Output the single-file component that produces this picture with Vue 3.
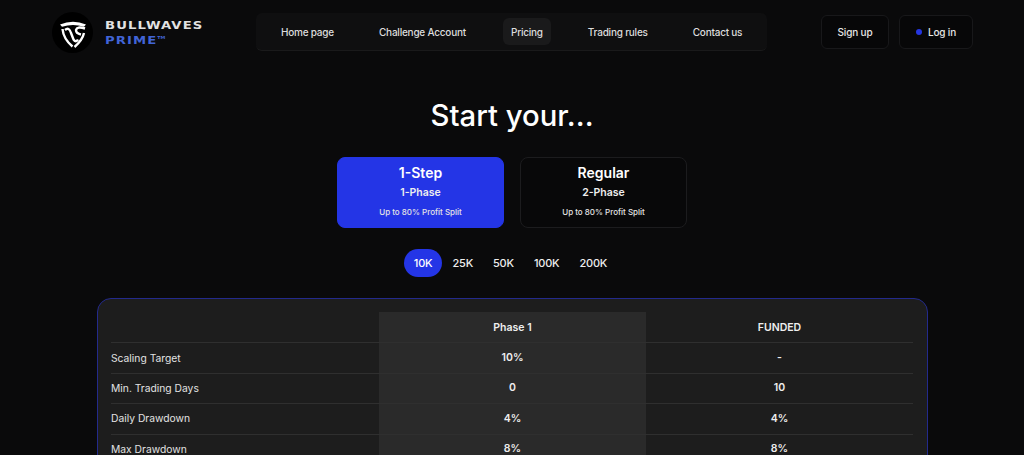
<template>
  <div class="page">
    <header class="topbar">
      <div class="brand">
        <svg class="logo" width="41" height="41" viewBox="0 0 41 41">
          <circle cx="20.5" cy="20.5" r="20.5" fill="#000" />
          <path d="M8 12.5 Q21 7 34 12.5 L32 14.8 Q21 11 10 14.8 Z" fill="#fff" />
          <g fill="none" stroke="#fff" stroke-width="2.4">
            <path d="M10.5 17 Q11.5 27 20.5 34.5" />
            <path d="M13 18 Q17 14.5 19 21 L21.5 27.5 Q24 31 26 27.5" />
            <path d="M33 16.5 Q25 14 24 18 Q24 21.5 29 22.5" />
            <path d="M32 21 Q30.5 28 22.5 35" />
          </g>
        </svg>
        <div class="brand-text">
          <div class="brand-top">BULLWAVES</div>
          <div class="brand-bottom">PRIME<sup>TM</sup></div>
        </div>
      </div>
      <nav class="nav">
        <a v-for="item in navItems" :key="item" class="nav-link" :class="{ active: item === 'Pricing' }">{{ item }}</a>
      </nav>
      <div class="auth">
        <button class="auth-btn signup">Sign up</button>
        <button class="auth-btn login"><span class="dot"></span>Log in</button>
      </div>
    </header>

    <h1 class="title">Start your...</h1>

    <div class="plans">
      <div v-for="plan in plans" :key="plan.name" class="plan" :class="{ selected: plan.selected }">
        <div class="plan-name">{{ plan.name }}</div>
        <div class="plan-phase">{{ plan.phase }}</div>
        <div class="plan-split">Up to 80% Profit Split</div>
      </div>
    </div>

    <div class="sizes">
      <span v-for="size in sizes" :key="size" class="size" :class="{ current: size === '10K' }">{{ size }}</span>
    </div>

    <section class="table-card">
      <div class="table">
        <div class="row head">
          <div class="cell label"></div>
          <div class="cell phase">Phase 1</div>
          <div class="cell">FUNDED</div>
        </div>
        <div v-for="row in rows" :key="row.label" class="row">
          <div class="cell label">{{ row.label }}</div>
          <div class="cell phase">{{ row.phase }}</div>
          <div class="cell">{{ row.funded }}</div>
        </div>
      </div>
    </section>
  </div>
</template>

<script setup>
const navItems = ["Home page", "Challenge Account", "Pricing", "Trading rules", "Contact us"];

const plans = [
  { name: "1-Step", phase: "1-Phase", selected: true },
  { name: "Regular", phase: "2-Phase", selected: false },
];

const sizes = ["10K", "25K", "50K", "100K", "200K"];

const rows = [
  { label: "Scaling Target", phase: "10%", funded: "-" },
  { label: "Min. Trading Days", phase: "0", funded: "10" },
  { label: "Daily Drawdown", phase: "4%", funded: "4%" },
  { label: "Max Drawdown", phase: "8%", funded: "8%" },
];
</script>

<style>
html,
body {
  background: #0a0a0b;
  overflow: hidden;
}
</style>

<style scoped>
.page {
  height: 455px;
  overflow: hidden;
  background: #0a0a0b;
  color: #fff;
  font-family: Inter, "Liberation Sans", sans-serif;
}

.topbar {
  display: flex;
  align-items: flex-start;
  padding: 12px 51px 0 52px;
}

.brand {
  display: flex;
  align-items: center;
  gap: 12px;
  width: 204px;
  height: 41px;
}

.brand-text {
  font-family: "DejaVu Sans", sans-serif;
  font-weight: 700;
  line-height: 15px;
  transform: scaleX(1.2);
  transform-origin: left center;
}

.brand-top {
  font-size: 11px;
  letter-spacing: 0.9px;
  color: #e2e2e2;
}

.brand-bottom {
  font-size: 11px;
  letter-spacing: 0.9px;
  color: #4164d6;
}

.brand-bottom sup {
  font-size: 4px;
  vertical-align: 5px;
  line-height: 0;
  letter-spacing: 0;
}

.nav {
  display: flex;
  align-items: center;
  gap: 29px;
  width: 511px;
  height: 38px;
  margin-top: 1px;
  padding-left: 17px;
  box-sizing: border-box;
  background: #0f0f10;
  border-bottom: 1px solid #1a1a1b;
  border-radius: 6px;
}

.nav-link {
  padding: 6.5px 8px;
  font-size: 10px;
  font-weight: 500;
  line-height: 14px;
  letter-spacing: -0.22px;
  color: #ddd;
  border-radius: 6px;
}

.nav-link.active {
  background: #1a1a1b;
}

.auth {
  display: flex;
  gap: 10px;
  margin-left: 54px;
  margin-top: 3px;
}

.auth-btn {
  display: flex;
  align-items: center;
  justify-content: center;
  height: 34px;
  background: #070708;
  border: 1px solid #18181a;
  border-radius: 6px;
  color: #e6e6e6;
  font-family: inherit;
  font-size: 10px;
  font-weight: 500;
  letter-spacing: -0.15px;
}

.signup {
  width: 68px;
}

.login {
  width: 74px;
  gap: 6px;
}

.dot {
  width: 6px;
  height: 6px;
  border-radius: 50%;
  background: #2536e0;
}

.title {
  margin: 43px 0 0;
  font-size: 29.3px;
  font-weight: 500;
  line-height: 40px;
  text-align: center;
}

.plans {
  display: flex;
  justify-content: center;
  gap: 16px;
  margin-top: 21px;
}

.plan {
  display: flex;
  flex-direction: column;
  align-items: center;
  width: 167px;
  height: 71px;
  box-sizing: border-box;
  padding-top: 6px;
  border: 1px solid #1c1c1e;
  border-radius: 8px;
  background: #080809;
}

.plan.selected {
  background: #2435e6;
  border-color: #2435e6;
}

.plan-name {
  font-size: 14px;
  font-weight: 600;
  line-height: 18px;
}

.plan-phase {
  margin-top: 4px;
  font-size: 10.5px;
  font-weight: 600;
  line-height: 14px;
  color: #eee;
}

.plan-split {
  margin-top: 6px;
  font-size: 8px;
  font-weight: 500;
  line-height: 12px;
  color: #e4e4e4;
}

.sizes {
  display: flex;
  justify-content: center;
  align-items: center;
  margin-top: 21px;
  padding-right: 3px;
  height: 28px;
}

.size {
  padding: 0 10px;
  font-size: 11px;
  font-weight: 500;
  line-height: 28px;
  letter-spacing: -0.2px;
  color: #eee;
}

.size.current {
  background: #2435e6;
  border-radius: 14px;
  color: #fff;
}

.table-card {
  margin: 21px 96px 0 97px;
  height: 200px;
  padding: 13px 14px 0 13px;
  background: #1d1d1d;
  border: 1px solid #232a8c;
  border-radius: 14px;
  box-sizing: border-box;
}

.row {
  display: grid;
  grid-template-columns: 268px 267px 1fr;
  height: 30.4px;
  border-top: 1px solid #2f2f2f;
  box-sizing: border-box;
}

.row.head {
  border-top: none;
}

.cell {
  display: flex;
  align-items: center;
  justify-content: center;
  font-size: 10.5px;
  font-weight: 600;
  color: #eee;
}

.row:not(.head) .cell {
  padding-bottom: 1px;
}

.cell.label {
  justify-content: flex-start;
  font-size: 10.3px;
  font-weight: 400;
  color: #e2e2e2;
}

.cell.phase {
  background: #2a2a2a;
}
</style>
